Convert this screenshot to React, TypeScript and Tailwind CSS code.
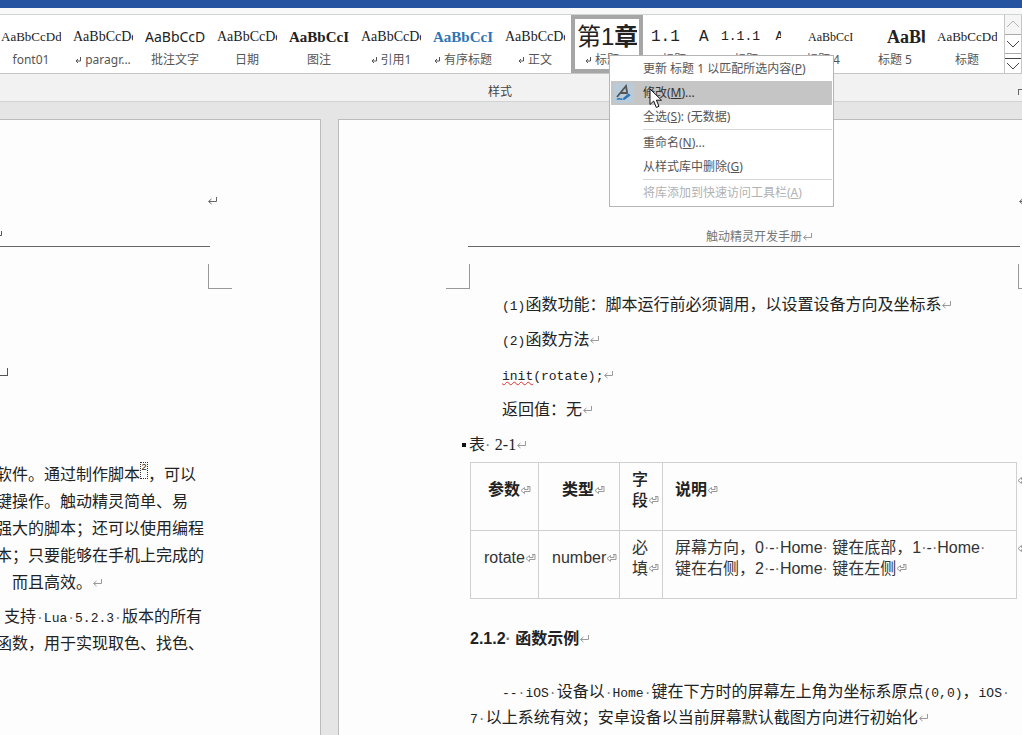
import type { ReactNode } from 'react';

type StyleItem = {
    label: string,
    preview: string,
    look: string,
    mark?: boolean,
    selected?: boolean
};

const serif = 'font-["Liberation_Serif","Noto_Sans_CJK_SC",serif]';

const styles: StyleItem[] = [
    {label: 'font01', preview: 'AaBbCcDdE', look: serif + ' text-[13px]'},
    {label: 'paragr...', preview: 'AaBbCcDd', look: serif + ' text-[14px]', mark: true},
    {label: '批注文字', preview: 'AaBbCcD', look: 'font-["Noto_Sans",sans-serif] text-[14px]'},
    {label: '日期', preview: 'AaBbCcDd', look: serif + ' text-[14px]'},
    {label: '图注', preview: 'AaBbCcI', look: serif + ' text-[15px] font-bold'},
    {label: '引用1', preview: 'AaBbCcDd', look: serif + ' text-[14px]', mark: true},
    {label: '有序标题', preview: 'AaBbCcI', look: serif + ' text-[15px] font-bold text-[#2e75b5]', mark: true},
    {label: '正文', preview: 'AaBbCcDd', look: serif + ' text-[14px]', mark: true},
    {label: '标题 1', preview: '第1章', look: 'font-["Liberation_Sans","Noto_Sans_CJK_SC",sans-serif] text-[24px]', mark: true, selected: true},
    {label: '标题 2', preview: '1.1  A', look: 'font-["Liberation_Mono",monospace] text-[16px] pl-[2px]'},
    {label: '标题 3', preview: '1.1.1  A', look: 'font-["Liberation_Mono",monospace] text-[13px]'},
    {label: '标题 4', preview: 'AaBbCcI', look: serif + ' text-[12px] pl-[15px]'},
    {label: '标题 5', preview: 'AaBb', look: serif + ' text-[18px] font-bold pl-[22px]'},
    {label: '标题', preview: 'AaBbCcDdE', look: serif + ' text-[13px]'},
];

function Return({className = 'text-[#999]'}: {className?: string}) {
    return (
        <svg className={'inline-block h-[9px] w-[10px] shrink-0 ' + className} viewBox="0 0 10 9" fill="none" stroke="currentColor" aria-hidden="true">
            <path d="M9.5 0v4.5H2M4.5 2L1.5 4.5 4.5 7"/>
        </svg>
    );
}

// hollow variant used at the end of table cells
function CellEnd() {
    return (
        <svg className="inline-block h-[10px] w-[11px] shrink-0 text-[#999]" viewBox="0 0 11 10" fill="none" stroke="currentColor" aria-hidden="true">
            <path d="M7 .5h3v5H4.500v2L1 4.500l3.500-3v2H8v-3"/>
        </svg>
    );
}

function Mono({children}: {children: ReactNode}) {
    return <span className={'font-["Liberation_Mono",monospace] text-[13px] leading-none'}>{children}</span>;
}

function Dot() {
    return <span className="text-[#777]">·</span>;
}

function StyleButton({item}: {item: StyleItem}) {
    return (
        <button type="button"
                className={'flex h-[58px] w-[72px] shrink-0 flex-col items-center overflow-hidden ' + (item.selected ? 'outline-[4px] -outline-offset-4 outline-[#a6a6a6]' : '')}>
            <span className={'block h-9 w-[60px] shrink-0 overflow-hidden pt-1 text-left leading-[36px] whitespace-pre ' + item.look}>
                {item.preview === '第1章' ? <>第1<b>章</b></> : item.preview}
            </span>
            <span className="flex h-[18px] items-center gap-1 text-[12px] leading-[18px] whitespace-nowrap text-[#555]">
                {item.mark && <svg className="h-[6px] w-[6px]" viewBox="0 0 6 6" fill="none" stroke="currentColor" aria-hidden="true"><path d="M5.500 0v4H1M3 2L1 4l2 2"/></svg>}
                {item.label}
            </span>
        </button>
    );
}

function Gallery() {
    return (
        <div className="flex h-[60px] border-y border-t-[#ccd6d2] border-b-[#c6c6c6] bg-white">
            <div className="flex min-w-0 flex-1 overflow-hidden">
                <div className="-ml-[5px] flex">
                    {styles.map((item, i) => <StyleButton key={i} item={item}/>)}
                </div>
            </div>
            <div className="flex w-[18px] shrink-0 flex-col divide-y divide-[#ababab] border-x border-[#c6c6c6] text-[#444]">
                <button type="button" aria-label="向上" className="flex flex-1 items-center justify-center bg-[#f5f5f5] text-[#b5b5b5]">
                    <svg className="h-2 w-[14px]" viewBox="0 0 14 8" fill="none" stroke="currentColor"><path d="M1 7l6-6 6 6"/></svg>
                </button>
                <button type="button" aria-label="向下" className="flex flex-1 items-center justify-center">
                    <svg className="h-2 w-[14px]" viewBox="0 0 14 8" fill="none" stroke="currentColor"><path d="M1 1l6 6 6-6"/></svg>
                </button>
                <button type="button" aria-label="其他" className="flex flex-1 items-center justify-center">
                    <svg className="h-[14px] w-4" viewBox="0 0 16 14" fill="none" stroke="currentColor"><path d="M0 1.500h16M2 6l6 6 6-6"/></svg>
                </button>
            </div>
        </div>
    );
}

function MenuItem({children, active, disabled}: {children: ReactNode, active?: boolean, disabled?: boolean}) {
    return (
        <button type="button" role="menuitem" disabled={disabled}
                className={'flex h-6 w-full items-center text-left whitespace-pre ' + (active ? 'bg-[#c5c5c5] text-[#333]' : disabled ? 'text-[#b1b1b1]' : 'text-[#555]')}>
            <span className="flex w-8 shrink-0 items-center pl-[3px]">
                {active &&
                    <span className="flex h-5 w-5 items-center justify-center bg-[#b9cbd9]">
                        <svg className="h-[18px] w-[18px]" viewBox="0 0 18 18" fill="none" aria-hidden="true">
                            <path d="M2 13L11 2l1.500 9M5.500 9h6.500" stroke="#555" strokeWidth="1.800"/>
                            <path d="M2 15.500c3-2.500 4 1 7-.5" stroke="#2e75b5" strokeWidth="1.500"/>
                            <path d="M8 13.500l6-4.500 2 2.500-6 4.500-2.500.5z" fill="#2e75b5" stroke="#dde8f0" strokeWidth=".5"/>
                        </svg>
                    </span>}
            </span>
            <span>{children}</span>
        </button>
    );
}

function ContextMenu() {
    return (
        <div role="menu" className="absolute top-[55px] left-[609px] w-[225px] border border-[#b5b5b5] bg-white p-px text-[12px]">
            <MenuItem>更新 标题 1 以匹配所选内容(<u>P</u>)</MenuItem>
            <MenuItem active>修改(<u>M</u>)...</MenuItem>
            <MenuItem>全选(<u>S</u>): (无数据)</MenuItem>
            <hr className="mb-px ml-8 border-[#d8d8d8]"/>
            <MenuItem>重命名(<u>N</u>)...</MenuItem>
            <MenuItem>从样式库中删除(<u>G</u>)</MenuItem>
            <hr className="mb-px ml-8 border-[#d8d8d8]"/>
            <MenuItem disabled>将库添加到快速访问工具栏(<u>A</u>)</MenuItem>
            <svg className="absolute top-8 left-[39px] h-[21px] w-[14px]" viewBox="0 0 14 21" aria-hidden="true">
                <path d="M1 1v15.500l3.700-3.500 2.600 6.500 2.700-1.200-2.600-6.100H12.500z" fill="#fff" stroke="#111"/>
            </svg>
        </div>
    );
}

function LeftPage() {
    return (
        <section className="w-[321px] shrink-0 overflow-hidden border-t border-r border-[#bbb] bg-[#fdfdfd] pt-[75px]">
            <header className="w-[210px]">
                <div className="-mr-[7px] flex h-3 items-center justify-end"><Return className="text-[#666]"/></div>
                <div className="flex h-10 items-end border-b border-[#666] pb-[6px]"><span className="-ml-[8px] flex"><Return className="text-[#555]"/></span></div>
            </header>
            <div className="mt-[17px] ml-[208px] h-[25px] w-6 border-b border-l border-[#999]"/>
            <div className="mt-[79px] h-2 w-[8px] border-r border-b border-[#555]"/>
            <div className="mt-[85px] -ml-1 leading-[27px] whitespace-nowrap">
                <p>
                    软件。通过制作脚本<sup className="inline-flex h-[17px] w-2 items-start justify-center border border-dotted border-[#333] align-text-bottom text-[9px] leading-[9px]">2</sup>，可以<br/>
                    键操作。触动精灵简单、易<br/>
                    强大的脚本；还可以使用编程<br/>
                    本；只要能够在手机上完成的<br/>
                    <span className="pl-4">而且高效。<Return/></span>
                </p>
                <p className="mt-[7px]">
                    <span className="pl-2">支持<Mono><Dot/>Lua<Dot/>5.2.3<Dot/></Mono>版本的所有</span><br/>
                    函数，用于实现取色、找色、
                </p>
            </div>
        </section>
    );
}

function ParamTable() {
    return (
        <table className={'w-full border-collapse text-left leading-[21px] text-[#333] font-["Liberation_Sans","Noto_Sans_CJK_SC",sans-serif] [&_td]:border [&_td]:border-[#d0d0d0] [&_th]:border [&_th]:border-[#d0d0d0]'}>
            <thead>
                <tr className="h-[68px] text-[#222]">
                    <th className="w-[68px] pb-[14px] pl-[17px] whitespace-nowrap">参数<CellEnd/></th>
                    <th className="w-[81px] pb-[14px] pl-[23px] whitespace-nowrap">类型<CellEnd/></th>
                    <th className="w-[43px] pb-[14px] pl-3 font-medium whitespace-nowrap">字<br/>段<CellEnd/></th>
                    <th className="relative pb-[14px] pl-3">
                        说明<CellEnd/>
                        <span className="absolute top-[6px] left-full ml-px"><CellEnd/></span>
                    </th>
                </tr>
            </thead>
            <tbody>
                <tr className="h-[68px]">
                    <td className="pb-[14px] pl-[13px] whitespace-nowrap">rotate<CellEnd/></td>
                    <td className="pb-[14px] pl-[13px] whitespace-nowrap">number<CellEnd/></td>
                    <td className="pb-[14px] pl-3 whitespace-nowrap">必<br/>填<CellEnd/></td>
                    <td className="relative pb-[14px] pl-3 whitespace-nowrap">
                        屏幕方向，0<Dot/>-<Dot/>Home<Dot/> 键在底部，1<Dot/>-<Dot/>Home<Dot/><br/>
                        键在右侧，2<Dot/>-<Dot/>Home<Dot/> 键在左侧<CellEnd/>
                        <span className="absolute top-[6px] left-full ml-px"><CellEnd/></span>
                    </td>
                </tr>
            </tbody>
        </table>
    );
}

function RightPage() {
    return (
        <section className="min-w-0 flex-1 overflow-hidden border-t border-l border-[#bbb] bg-[#fdfdfd] pt-[75px]">
            <header className="mr-[2px] ml-[129px]">
                <div className="-mr-2 flex h-3 items-center justify-end"><Return className="text-[#666]"/></div>
                <div className="flex h-10 items-end justify-center border-b border-[#666] pl-[30px] text-[12px] leading-[18px] text-[#777]">
                    <span>触动精灵开发手册<Return/></span>
                </div>
            </header>
            <div className="mt-[17px] -mr-5 -mb-[2px] ml-[107px] flex justify-between">
                <div className="h-[25px] w-6 border-r border-b border-[#999]"/>
                <div className="h-[25px] w-6 border-b border-l border-[#999]"/>
            </div>
            <article className="mr-[5px] ml-[131px]">
                <div className="leading-[35px] whitespace-nowrap">
                    <p className="pl-8"><Mono>(1)</Mono>函数功能：脚本运行前必须调用，以设置设备方向及坐标系<Return/></p>
                    <p className="pl-8"><Mono>(2)</Mono>函数方法<Return/></p>
                    <p className="pl-8"><Mono><span className="underline decoration-[#e03030] decoration-wavy decoration-1">init</span>(rotate);</Mono><Return/></p>
                    <p className="pl-8">返回值：无<Return/></p>
                    <p className="-ml-2 flex items-center">
                        <span className="mr-[3px] h-1 w-1 bg-[#111]"/>
                        <span>表<Dot/> <span className={serif}>2-1</span><Return/></span>
                    </p>
                </div>
                <ParamTable/>
                <h3 className="mt-[27px] leading-[26px] font-bold">2.1.2<Dot/> 函数示例<Return/></h3>
                <p className="mt-[27px] indent-8 leading-[26px] whitespace-nowrap">
                    <Mono>--<Dot/>iOS<Dot/></Mono>设备以<Mono><Dot/>Home<Dot/></Mono>键在下方时的屏幕左上角为坐标系原点<Mono>(0,0)</Mono>，<Mono>iOS<Dot/></Mono><br/>
                    <Mono>7<Dot/></Mono>以上系统有效；安卓设备以当前屏幕默认截图方向进行初始化<Return/>
                </p>
            </article>
        </section>
    );
}

export default function App() {
    return (
        <div className={'relative flex min-h-screen flex-col overflow-hidden bg-[#e5e5e5] text-[16px] text-[#222] font-["Liberation_Sans","Noto_Sans_CJK_SC",sans-serif]'}>
            <div className="h-2 bg-[#2653a0]"/>
            <div className={'border-b border-[#d2d2d2] bg-[#f2f2f2] font-["Noto_Sans","Noto_Sans_CJK_SC",sans-serif]'}>
                <div className="h-[6px] bg-[#f8f8f8]"/>
                <Gallery/>
                <div className="flex h-[27px] items-center pt-[9px]">
                    <span className="flex-1 pl-[6px] pr-7 text-center text-[12px] leading-[18px] text-[#444]">样式</span>
                    <button type="button" aria-label="样式窗格" className="-ml-1 h-[6px] w-1 border-t border-l border-[#666]"/>
                </div>
            </div>
            <main className="flex flex-1 gap-[17px] pt-[17px]">
                <LeftPage/>
                <RightPage/>
            </main>
            <div className={'font-["Noto_Sans","Noto_Sans_CJK_SC",sans-serif]'}>
                <ContextMenu/>
            </div>
        </div>
    );
}
